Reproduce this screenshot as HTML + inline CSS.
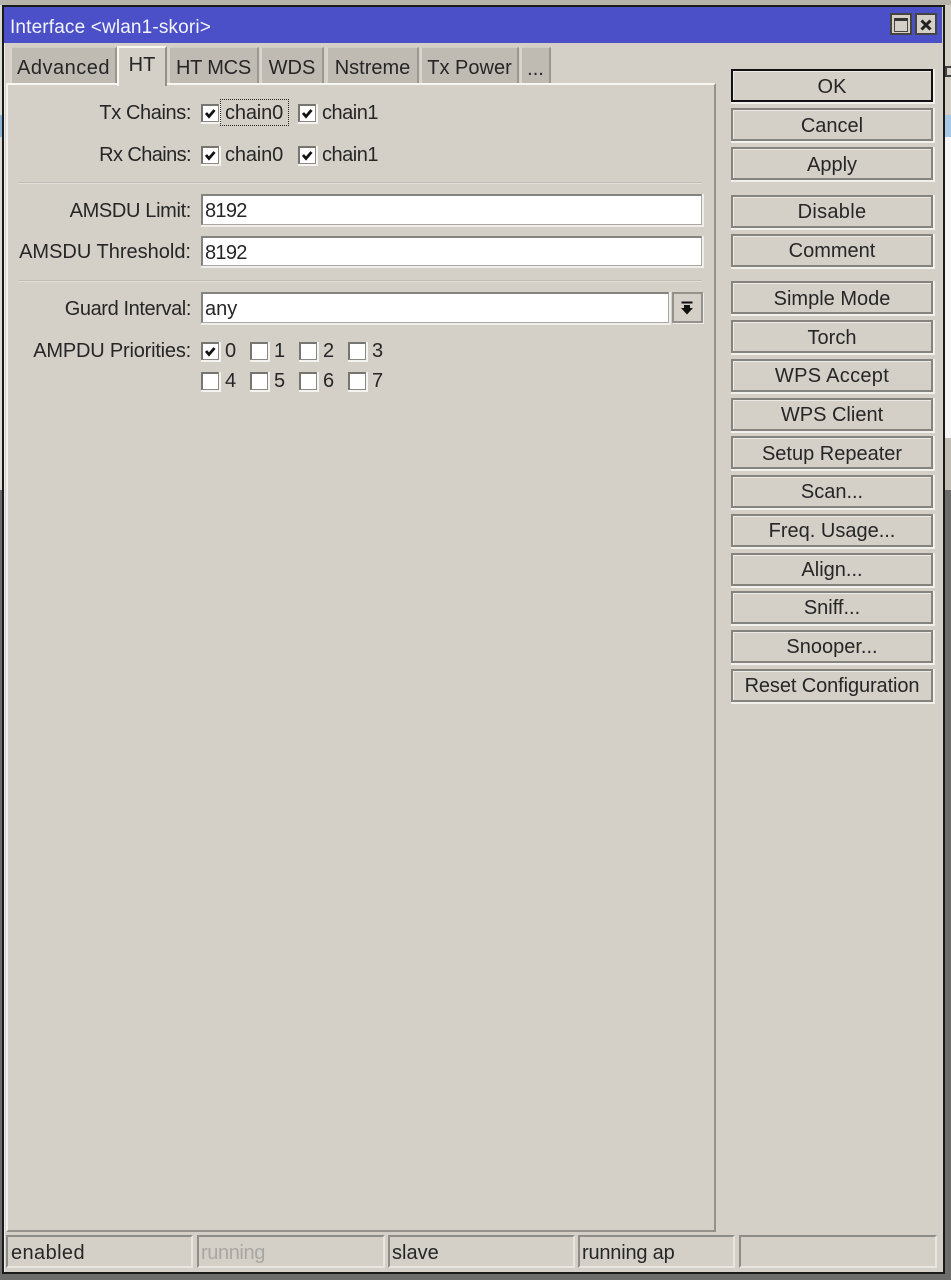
<!DOCTYPE html>
<html>
<head>
<meta charset="utf-8">
<style>
html,body{margin:0;padding:0}
body{width:951px;height:1280px;position:relative;overflow:hidden;background:#6d6d6b;font-family:"Liberation Sans",sans-serif;font-size:20px;color:#262626}
div,span{position:absolute;box-sizing:border-box}
.t{white-space:nowrap;line-height:24px;height:24px}
.r{text-align:right;width:180px;left:11px}
.btn{left:731px;width:202px;height:33px;border:2px solid #85837d;background:#d4d0c8;box-shadow:1px 1px 0 1px #f2f0ec,inset 1px 1px 0 #ecebe6;text-align:center;line-height:31px;white-space:nowrap}
.tab{top:47px;height:37px;background:#bfbbb3;border-left:2px solid #d8d5ce;border-right:2px solid #9a9790;border-top:1px solid #cfccc5;text-align:center;line-height:41px;white-space:nowrap}
.cb{width:18px;height:18px;background:#fff;border:1px solid #8a8883;border-top:2px solid #777570;border-left:2px solid #777570;box-shadow:1px 1px 0 1px #f4f3f0}
.cb svg{position:absolute;left:0;top:0}
.in{left:201px;background:#fff;border:2px solid #85837e;border-right:1px solid #aaa8a2;border-bottom:1px solid #aaa8a2;box-shadow:1px 1px 0 1px #efeeea;line-height:30px;padding-left:2px;white-space:nowrap}
.sep{left:19px;width:683px;height:2px;background:#bfbcb4;border-bottom:1px solid #e2e0da}
.st{top:1235px;height:33px;border-top:2px solid #8f8d88;border-left:2px solid #8f8d88;border-right:2px solid #e8e6e1;border-bottom:2px solid #e8e6e1;line-height:33px;padding-left:3px;white-space:nowrap;background:#d4d0c8}
</style>
</head>
<body>
<div style="left:0;top:0;width:951px;height:5px;background:#b6b3ab"></div>
<div style="left:945px;top:5px;width:6px;height:485px;background:#f6f6f6"></div>
<div style="left:945px;top:5px;width:6px;height:110px;background:#d4d0c8"></div>
<div style="left:945px;top:66px;width:8px;height:11px;border:2px solid #3f3e3a;background:#d4d0c8"></div>
<div style="left:945px;top:115px;width:6px;height:22px;background:#a8c8e8"></div>
<div style="left:945px;top:438px;width:6px;height:52px;background:#c0bdb5"></div>
<div style="left:0;top:5px;width:2px;height:485px;background:#dcdad4"></div>
<div style="left:0;top:115px;width:2px;height:22px;background:#8ab4d8"></div>

<div style="left:2px;top:5px;width:943px;height:1269px;background:#d4d0c8;border:2px solid #1a1a1a;box-shadow:inset 1px 1px 0 #eeece8"></div>
<div style="left:4px;top:7px;width:938px;height:36px;background:#4b50c8"></div>
<div class="t" style="left:10px;top:16px;color:#f4f4fb;font-size:19px;letter-spacing:.15px">Interface &lt;wlan1-skori&gt;</div>

<div style="left:890px;top:13px;width:22px;height:22px;background:#d4d0c8;border:2px solid #45443f"></div>
<div style="left:894px;top:18px;width:14px;height:14px;border:1px solid #444;border-top:3px solid #333"></div>
<div style="left:915px;top:13px;width:22px;height:22px;background:#d4d0c8;border:2px solid #45443f"></div>
<svg style="position:absolute;left:920px;top:19px" width="12" height="12" viewBox="0 0 12 12"><path d="M1.5 1.5L10.5 10.5M10.5 1.5L1.5 10.5" stroke="#222" stroke-width="3" fill="none"/></svg>

<div style="left:6px;top:83px;width:710px;height:1149px;background:#d4d0c8;border-top:2px solid #f7f6f3;border-left:2px solid #f1f0ec;border-right:2px solid #939189;border-bottom:2px solid #939189"></div>

<div class="tab" style="left:10px;width:107px;height:36px;letter-spacing:.5px">Advanced</div>
<div class="tab" style="left:168px;width:91px;height:36px;letter-spacing:-.2px">HT MCS</div>
<div class="tab" style="left:260px;width:64px;height:36px">WDS</div>
<div class="tab" style="left:326px;width:93px;height:36px">Nstreme</div>
<div class="tab" style="left:420px;width:99px;height:36px">Tx Power</div>
<div class="tab" style="left:520px;width:31px;height:36px;line-height:43px">...</div>
<div style="left:117px;top:46px;width:50px;height:40px;background:#d4d0c8;border-top:2px solid #f7f6f3;border-left:2px solid #f7f6f3;border-right:2px solid #939189;text-align:center;line-height:35px">HT</div>

<div class="t r" style="top:101px;letter-spacing:-.4px">Tx Chains:</div>
<div class="cb" style="left:201px;top:104px"><svg width="14" height="14" viewBox="0 0 14 14"><path d="M3 7L6 10.5L11.5 4" stroke="#111" stroke-width="2.8" fill="none"/></svg></div>
<div style="left:220px;top:99px;width:69px;height:27px;border:1px dotted #222"></div>
<div class="t" style="left:225px;top:101px;letter-spacing:-.15px">chain0</div>
<div class="cb" style="left:298px;top:104px"><svg width="14" height="14" viewBox="0 0 14 14"><path d="M3 7L6 10.5L11.5 4" stroke="#111" stroke-width="2.8" fill="none"/></svg></div>
<div class="t" style="left:322px;top:101px;letter-spacing:-.5px">chain1</div>

<div class="t r" style="top:143px;letter-spacing:-.6px">Rx Chains:</div>
<div class="cb" style="left:201px;top:146px"><svg width="14" height="14" viewBox="0 0 14 14"><path d="M3 7L6 10.5L11.5 4" stroke="#111" stroke-width="2.8" fill="none"/></svg></div>
<div class="t" style="left:225px;top:143px;letter-spacing:-.15px">chain0</div>
<div class="cb" style="left:298px;top:146px"><svg width="14" height="14" viewBox="0 0 14 14"><path d="M3 7L6 10.5L11.5 4" stroke="#111" stroke-width="2.8" fill="none"/></svg></div>
<div class="t" style="left:322px;top:143px;letter-spacing:-.5px">chain1</div>

<div class="sep" style="top:182px"></div>

<div class="t r" style="top:199px;letter-spacing:-.35px">AMSDU Limit:</div>
<div class="in" style="top:194px;width:501px;height:31px;letter-spacing:-.7px">8192</div>
<div class="t r" style="top:240px">AMSDU Threshold:</div>
<div class="in" style="top:236px;width:501px;height:30px;letter-spacing:-.7px">8192</div>

<div class="sep" style="top:280px"></div>

<div class="t r" style="top:297px;letter-spacing:-.4px">Guard Interval:</div>
<div class="in" style="top:292px;width:468px;height:31px">any</div>
<div style="left:672px;top:292px;width:31px;height:31px;background:#d4d0c8;border:2px solid #939189;box-shadow:1px 1px 0 #efeeea"></div>
<svg style="position:absolute;left:680px;top:301px" width="14" height="14" viewBox="0 0 14 14"><path d="M1.5 1.5H12.5" stroke="#111" stroke-width="2" fill="none"/><path d="M4 4H10V7H13L7 13.5L1 7H4Z" fill="#111"/></svg>

<div class="t r" style="top:339px;letter-spacing:-.2px">AMPDU Priorities:</div>
<div class="cb" style="left:201px;top:342px"><svg width="14" height="14" viewBox="0 0 14 14"><path d="M3 7L6 10.5L11.5 4" stroke="#111" stroke-width="2.8" fill="none"/></svg></div>
<div class="t" style="left:225px;top:339px">0</div>
<div class="cb" style="left:250px;top:342px"></div><div class="t" style="left:274px;top:339px">1</div>
<div class="cb" style="left:299px;top:342px"></div><div class="t" style="left:323px;top:339px">2</div>
<div class="cb" style="left:348px;top:342px"></div><div class="t" style="left:372px;top:339px">3</div>
<div class="cb" style="left:201px;top:372px"></div><div class="t" style="left:225px;top:369px">4</div>
<div class="cb" style="left:250px;top:372px"></div><div class="t" style="left:274px;top:369px">5</div>
<div class="cb" style="left:299px;top:372px"></div><div class="t" style="left:323px;top:369px">6</div>
<div class="cb" style="left:348px;top:372px"></div><div class="t" style="left:372px;top:369px">7</div>

<div class="btn" style="top:69px;border-color:#111;line-height:33px">OK</div>
<div class="btn" style="top:108px;line-height:33px">Cancel</div>
<div class="btn" style="top:147px;line-height:33px">Apply</div>
<div class="btn" style="top:195px;letter-spacing:.3px">Disable</div>
<div class="btn" style="top:234px">Comment</div>
<div class="btn" style="top:281px;line-height:33px">Simple Mode</div>
<div class="btn" style="top:320px;line-height:33px">Torch</div>
<div class="btn" style="top:359px;letter-spacing:.3px">WPS Accept</div>
<div class="btn" style="top:398px">WPS Client</div>
<div class="btn" style="top:436px;line-height:33px">Setup Repeater</div>
<div class="btn" style="top:475px">Scan...</div>
<div class="btn" style="top:514px">Freq. Usage...</div>
<div class="btn" style="top:553px">Align...</div>
<div class="btn" style="top:591px">Sniff...</div>
<div class="btn" style="top:630px">Snooper...</div>
<div class="btn" style="top:669px;letter-spacing:-.1px">Reset Configuration</div>

<div class="st" style="left:6px;width:187px;letter-spacing:.4px">enabled</div>
<div class="st" style="left:197px;width:188px;color:#a9a7a2;letter-spacing:-.4px;padding-left:2px">running</div>
<div class="st" style="left:388px;width:187px;padding-left:2px">slave</div>
<div class="st" style="left:578px;width:157px;letter-spacing:-.2px;padding-left:2px">running ap</div>
<div class="st" style="left:739px;width:198px"></div>
</body>
</html>
